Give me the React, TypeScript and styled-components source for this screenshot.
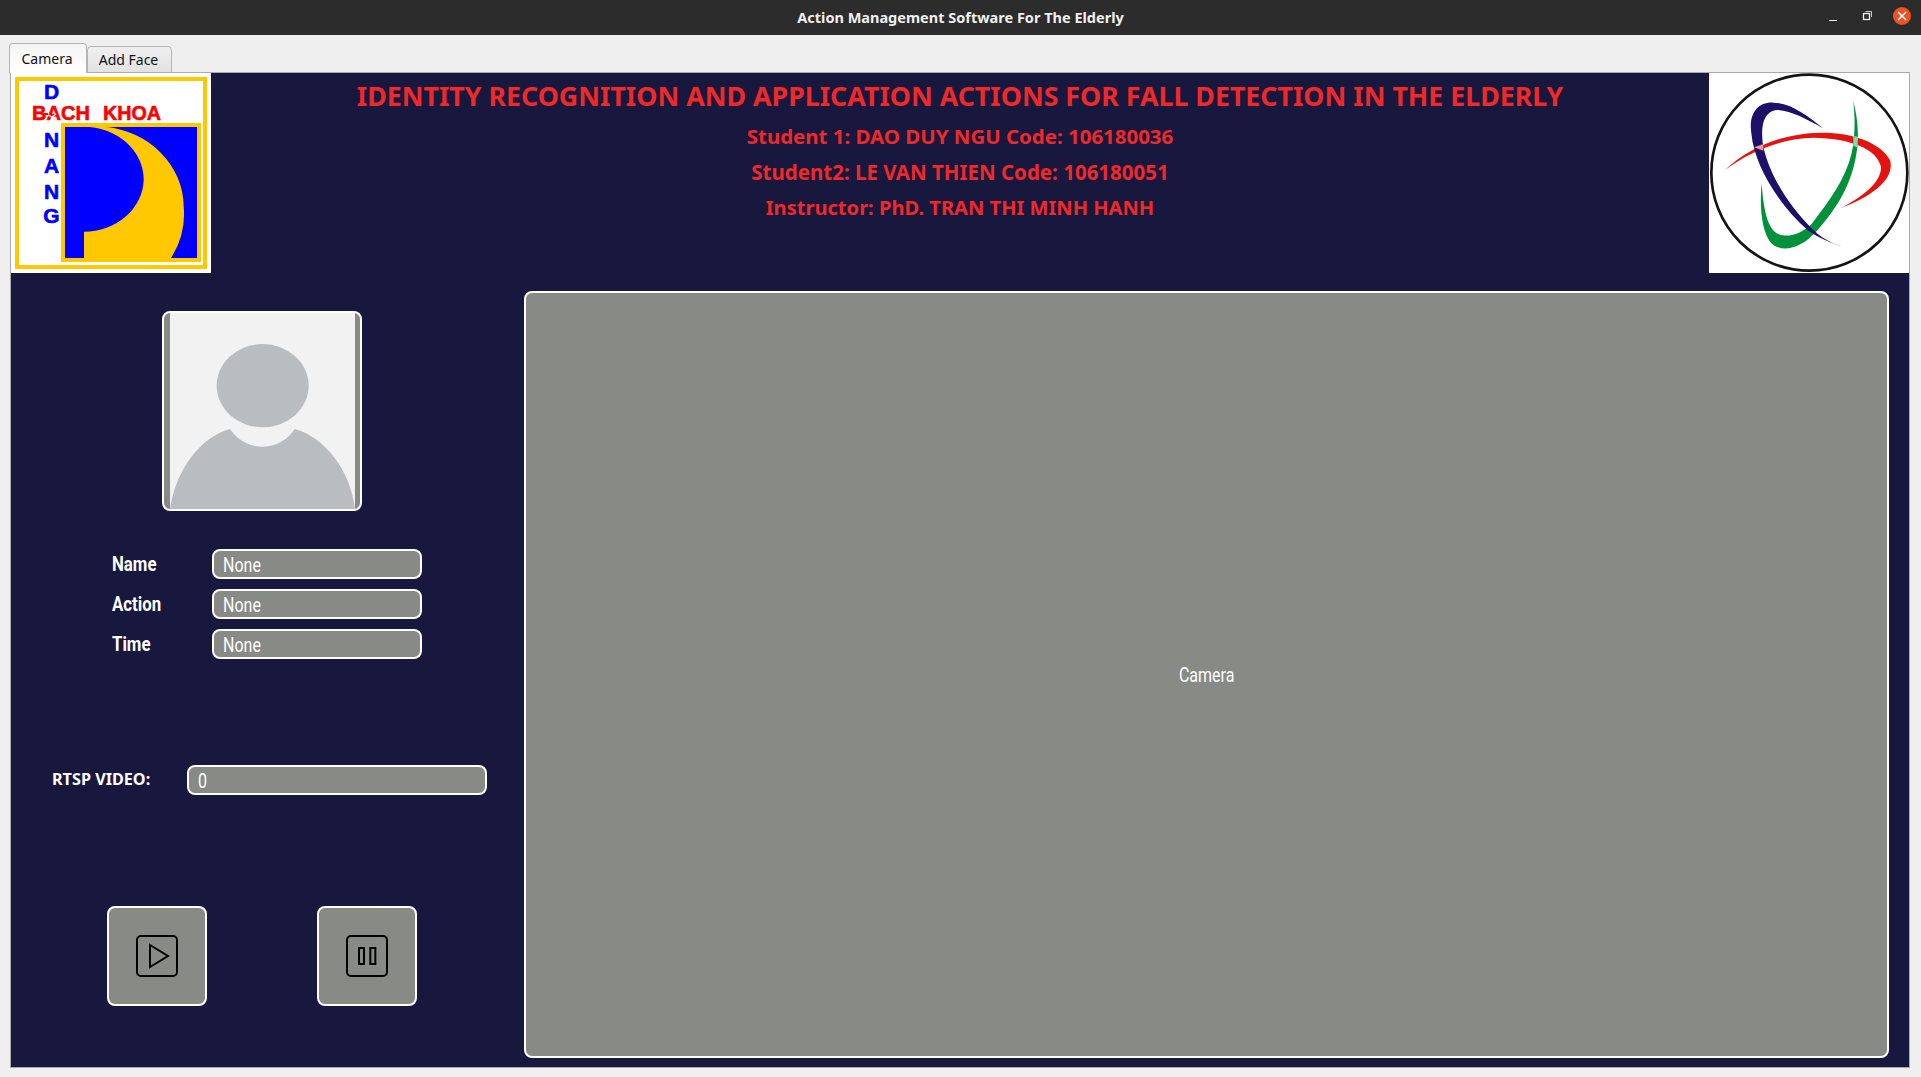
import React from "react";
import styled, { createGlobalStyle } from "styled-components";

const condensed = `"Roboto", "Liberation Sans", sans-serif`;
const heading = `"Noto Sans", "Open Sans", sans-serif`;

const GlobalStyle = createGlobalStyle`
  html, body {
    margin: 0;
    padding: 0;
    background: #efefef;
    overflow: hidden;
  }
`;

const Window = styled.div`
  width: 1921px;
  height: 1077px;
  display: flex;
  flex-direction: column;
  background: #efefef;
`;

const TitleBar = styled.header`
  height: 35px;
  flex: none;
  background: #2c2c2c;
  display: flex;
  align-items: center;
  justify-content: center;
  position: relative;
`;

const TitleText = styled.div`
  color: #f0f0f0;
  font: 700 14.5px ${heading};
  margin-top: -2px;
`;

const WindowControls = styled.div`
  position: absolute;
  right: 10px;
  top: 7px;
  display: flex;
  align-items: center;
  gap: 21px;
`;

const MinimizeIcon = styled.svg`
  margin-right: 3px;
`;

const CloseDot = styled.div`
  width: 18px;
  height: 18px;
  border-radius: 50%;
  background: #e95420;
  display: flex;
  align-items: center;
  justify-content: center;
`;

const TabWidget = styled.div`
  flex: none;
  margin: 9px 11px 0 10px;
  display: flex;
  flex-direction: column;
`;

const TabBar = styled.div`
  height: 29px;
  margin: 0 0 -1px -1px;
  display: flex;
  align-items: flex-end;
`;

const Tab = styled.div<{ $active?: boolean }>`
  position: relative;
  z-index: ${props => (props.$active ? 2 : 1)};
  box-sizing: border-box;
  height: ${props => (props.$active ? "30px" : "27px")};
  width: ${props => (props.$active ? "78px" : "85px")};
  padding-right: 2px;
  display: flex;
  align-items: center;
  justify-content: center;
  border: 1px solid #b4b4b4;
  border-bottom: ${props => (props.$active ? "none" : "1px solid #b4b4b4")};
  border-radius: 4px 4px 0 0;
  background: ${props =>
    props.$active ? "linear-gradient(#f4f4f4, #ffffff)" : "linear-gradient(#efefef, #e2e2e2)"};
  color: #111;
  font: 400 14px ${heading};
`;

const Pane = styled.div`
  position: relative;
  z-index: 1;
  height: 994px;
  border: 1px solid #aaaaaa;
  background: #18183f;
  display: flex;
  flex-direction: column;
`;

const Banner = styled.div`
  height: 200px;
  flex: none;
  display: grid;
  grid-template-columns: 200px 1fr 200px;
`;

const BannerText = styled.div`
  display: flex;
  flex-direction: column;
  align-items: center;
  padding-top: 5px;
  color: #ef2929;
`;

const MainTitle = styled.h1`
  margin: 0 0 4px;
  font: 700 26.77px/36px ${heading};
  white-space: nowrap;
`;

const SubTitle = styled.div<{ $size: number }>`
  font: 700 ${props => props.$size}px/36px ${heading};
`;

const Logo = styled.svg`
  display: block;
  width: 200px;
  height: 200px;
  background: #fff;
`;

const Main = styled.div`
  flex: 1;
  min-height: 0;
  display: grid;
  grid-template-columns: 513px 1fr;
`;

const SidePanel = styled.div`
  display: flex;
  flex-direction: column;
  padding-top: 38px;
`;

const Avatar = styled.div`
  box-sizing: border-box;
  width: 200px;
  height: 200px;
  margin-left: 151px;
  border: 2px solid #fff;
  border-radius: 8px;
  background: #888a85;
  display: flex;
  justify-content: center;
  overflow: hidden;
`;

const AvatarImage = styled.svg`
  width: 185px;
  height: 196px;
  display: block;
  background: #f2f2f2;
`;

const InfoForm = styled.div`
  margin-top: 38px;
  padding-left: 101px;
  display: flex;
  flex-direction: column;
  gap: 10px;
`;

const InfoRow = styled.div`
  display: flex;
  align-items: center;
`;

const InfoLabel = styled.label`
  width: 100px;
  color: #fff;
  font: 700 21px ${condensed};
`;

/* no condensed face is installed, so the glyphs are narrowed here */
const Narrow = styled.span`
  display: inline-block;
  transform: scaleX(0.8);
  transform-origin: left center;
`;

const ValueField = styled.div<{ $width: number }>`
  box-sizing: border-box;
  width: ${props => props.$width}px;
  height: 30px;
  padding: 2px 9px 0;
  border: 2px solid #fff;
  border-radius: 8px;
  background: #888a85;
  color: #fff;
  font: 400 20px/24px ${condensed};
`;

const RtspRow = styled(InfoRow)`
  margin-top: 106px;
  padding-left: 41px;
`;

const RtspLabel = styled.label`
  width: 135px;
  color: #fff;
  font: 700 16.2px ${heading};
  margin-top: -2px;
`;

const Controls = styled.div`
  margin-top: 111px;
  padding-left: 96px;
  display: flex;
  gap: 110px;
`;

const IconButton = styled.button`
  box-sizing: border-box;
  width: 100px;
  height: 100px;
  padding: 0;
  border: 2px solid #fff;
  border-radius: 8px;
  background: #888a85;
  display: flex;
  align-items: center;
  justify-content: center;
`;

const CameraWrap = styled.div`
  padding: 18px 20px 9px 0;
  display: flex;
`;

const CameraView = styled.div`
  flex: 1;
  box-sizing: border-box;
  border: 2px solid #fff;
  border-radius: 8px;
  background: #888a85;
  color: #fff;
  font: 400 20px ${condensed};
  display: flex;
  align-items: center;
  justify-content: center;
`;

const CameraCaption = styled.span`
  display: inline-block;
  transform: scaleX(0.8);
`;

function BachKhoaLogo() {
  const letter = { fontFamily: '"Liberation Sans", sans-serif', fontWeight: 700, strokeWidth: 0.6 };
  return (
    <Logo viewBox="0 0 200 200">
      <rect x="6" y="6" width="188" height="188" fill="#fff" stroke="#ffc800" strokeWidth="4" />
      <rect x="52" y="52" width="136" height="135" fill="#0000ff" stroke="#ffc800" strokeWidth="4" />
      <path
        d="M73 185 V158.7 A60 53 0 0 0 132.7 107 A60 53 0 0 0 72.3 53.7 H94 A88 81 0 0 1 172.7 133.7 A88 84 0 0 1 160 185 Z"
        fill="#ffc800"
      />
      <g {...letter} fontSize="21" fill="#0000ff" stroke="#0000ff" textAnchor="middle">
        <text x="40.5" y="26">D</text>
        <text x="40.5" y="74">N</text>
        <text x="40.5" y="100">A</text>
        <text x="40.5" y="126">N</text>
        <text x="40.5" y="150">G</text>
      </g>
      <g {...letter} fontSize="20" fill="#ff0000" stroke="#ff0000">
        <text x="21" y="47" textLength="58" lengthAdjust="spacing">BACH</text>
        <text x="92" y="47" textLength="58" lengthAdjust="spacingAndGlyphs">KHOA</text>
      </g>
      <path d="M33 41 H37" stroke="#ff0000" strokeWidth="2" />
      <path d="M37 42 L41 44 L45 41" stroke="#fff" strokeWidth="1.2" fill="none" />
    </Logo>
  );
}

function RingLogo() {
  return (
    <Logo viewBox="87 219 600 600">
      <circle cx="388" cy="518" r="294" fill="#fff" stroke="#141414" strokeWidth="8" />
      <path
        d="M245 550 C238 620 245 690 270 725 C300 760 360 750 410 693 C470 625 520 550 532 440 C537 390 530 340 520 305 C526 360 525 410 515 460 C495 540 450 600 395 672 C360 705 320 715 290 700 C260 680 250 620 245 550 Z"
        fill="#00913a"
      />
      <path
        d="M135 510 C210 440 310 400 420 398 C510 396 600 425 630 480 C645 530 590 585 480 625 C550 590 605 545 603 500 C590 445 510 415 400 413 C310 415 215 450 135 510 Z"
        fill="#e3130f"
      />
      <path
        d="M430 385 C380 345 330 308 280 308 C235 305 205 340 214 400 C222 490 290 610 385 692 C430 722 470 735 505 743 C460 735 420 712 390 680 C330 620 270 530 250 440 C240 380 250 335 290 330 C330 330 385 360 430 385 Z"
        fill="#1e1069"
      />
      <path d="M222 442 L250 432 L250 452 Z" fill="#e89a9a" />
      <path d="M520 408 L534 410 L532 442 L520 438 Z" fill="#79e0b0" />
    </Logo>
  );
}

function AvatarPicture() {
  return (
    <AvatarImage viewBox="88 69 555 588">
      <ellipse cx="366" cy="287" rx="138" ry="125" fill="#babdbf" />
      <path
        d="M88 657 C105 540 180 440 268 417 C290 450 325 470 366 470 C410 470 445 445 462 417 C550 440 630 540 643 657 Z"
        fill="#babdbf"
      />
    </AvatarImage>
  );
}

function PlayIcon() {
  return (
    <svg width="42" height="42" viewBox="0 0 126 126" fill="none" stroke="#000" strokeWidth="6">
      <rect x="3" y="3" width="120" height="120" rx="12" />
      <path d="M42 30 L96 63 L42 96 Z" />
    </svg>
  );
}

function PauseIcon() {
  return (
    <svg width="42" height="42" viewBox="0 0 126 126" fill="none" stroke="#000" strokeWidth="6">
      <rect x="3" y="3" width="120" height="120" rx="12" />
      <rect x="39" y="39" width="15" height="48" />
      <rect x="73" y="39" width="15" height="48" />
    </svg>
  );
}

const infoFields = ["Name", "Action", "Time"];

export default function App() {
  return (
    <Window>
      <GlobalStyle />
      <TitleBar>
        <TitleText>Action Management Software For The Elderly</TitleText>
        <WindowControls>
          <MinimizeIcon width="10" height="14" viewBox="0 0 10 14">
            <path d="M1 11.5 H9" stroke="#f0f0f0" strokeWidth="1" />
          </MinimizeIcon>
          <svg width="10" height="12" viewBox="0 0 10 12" fill="none" stroke="#f0f0f0">
            <rect x="1.5" y="3.5" width="6" height="6" strokeWidth="1.3" />
            <path d="M3.5 1.5 H9.5 V7" strokeWidth="0.8" />
          </svg>
          <CloseDot>
            <svg width="10" height="10" viewBox="0 0 10 10">
              <path d="M1 1 L9 9 M9 1 L1 9" stroke="#fff" strokeWidth="1.5" />
            </svg>
          </CloseDot>
        </WindowControls>
      </TitleBar>
      <TabWidget>
        <TabBar>
          <Tab $active>Camera</Tab>
          <Tab>Add Face</Tab>
        </TabBar>
        <Pane>
          <Banner>
            <BachKhoaLogo />
            <BannerText>
              <MainTitle>IDENTITY RECOGNITION AND APPLICATION ACTIONS FOR FALL DETECTION IN THE ELDERLY</MainTitle>
              <SubTitle $size={20.45}>Student 1: DAO DUY NGU Code: 106180036</SubTitle>
              <SubTitle $size={20.5}>Student2: LE VAN THIEN Code: 106180051</SubTitle>
              <SubTitle $size={20.1}>Instructor: PhD. TRAN THI MINH HANH</SubTitle>
            </BannerText>
            <RingLogo />
          </Banner>
          <Main>
            <SidePanel>
              <Avatar>
                <AvatarPicture />
              </Avatar>
              <InfoForm>
                {infoFields.map(field => (
                  <InfoRow key={field}>
                    <InfoLabel>
                      <Narrow>{field}</Narrow>
                    </InfoLabel>
                    <ValueField $width={210}>
                      <Narrow>None</Narrow>
                    </ValueField>
                  </InfoRow>
                ))}
              </InfoForm>
              <RtspRow>
                <RtspLabel>RTSP VIDEO:</RtspLabel>
                <ValueField $width={300}>
                  <Narrow>0</Narrow>
                </ValueField>
              </RtspRow>
              <Controls>
                <IconButton>
                  <PlayIcon />
                </IconButton>
                <IconButton>
                  <PauseIcon />
                </IconButton>
              </Controls>
            </SidePanel>
            <CameraWrap>
              <CameraView>
                <CameraCaption>Camera</CameraCaption>
              </CameraView>
            </CameraWrap>
          </Main>
        </Pane>
      </TabWidget>
    </Window>
  );
}
